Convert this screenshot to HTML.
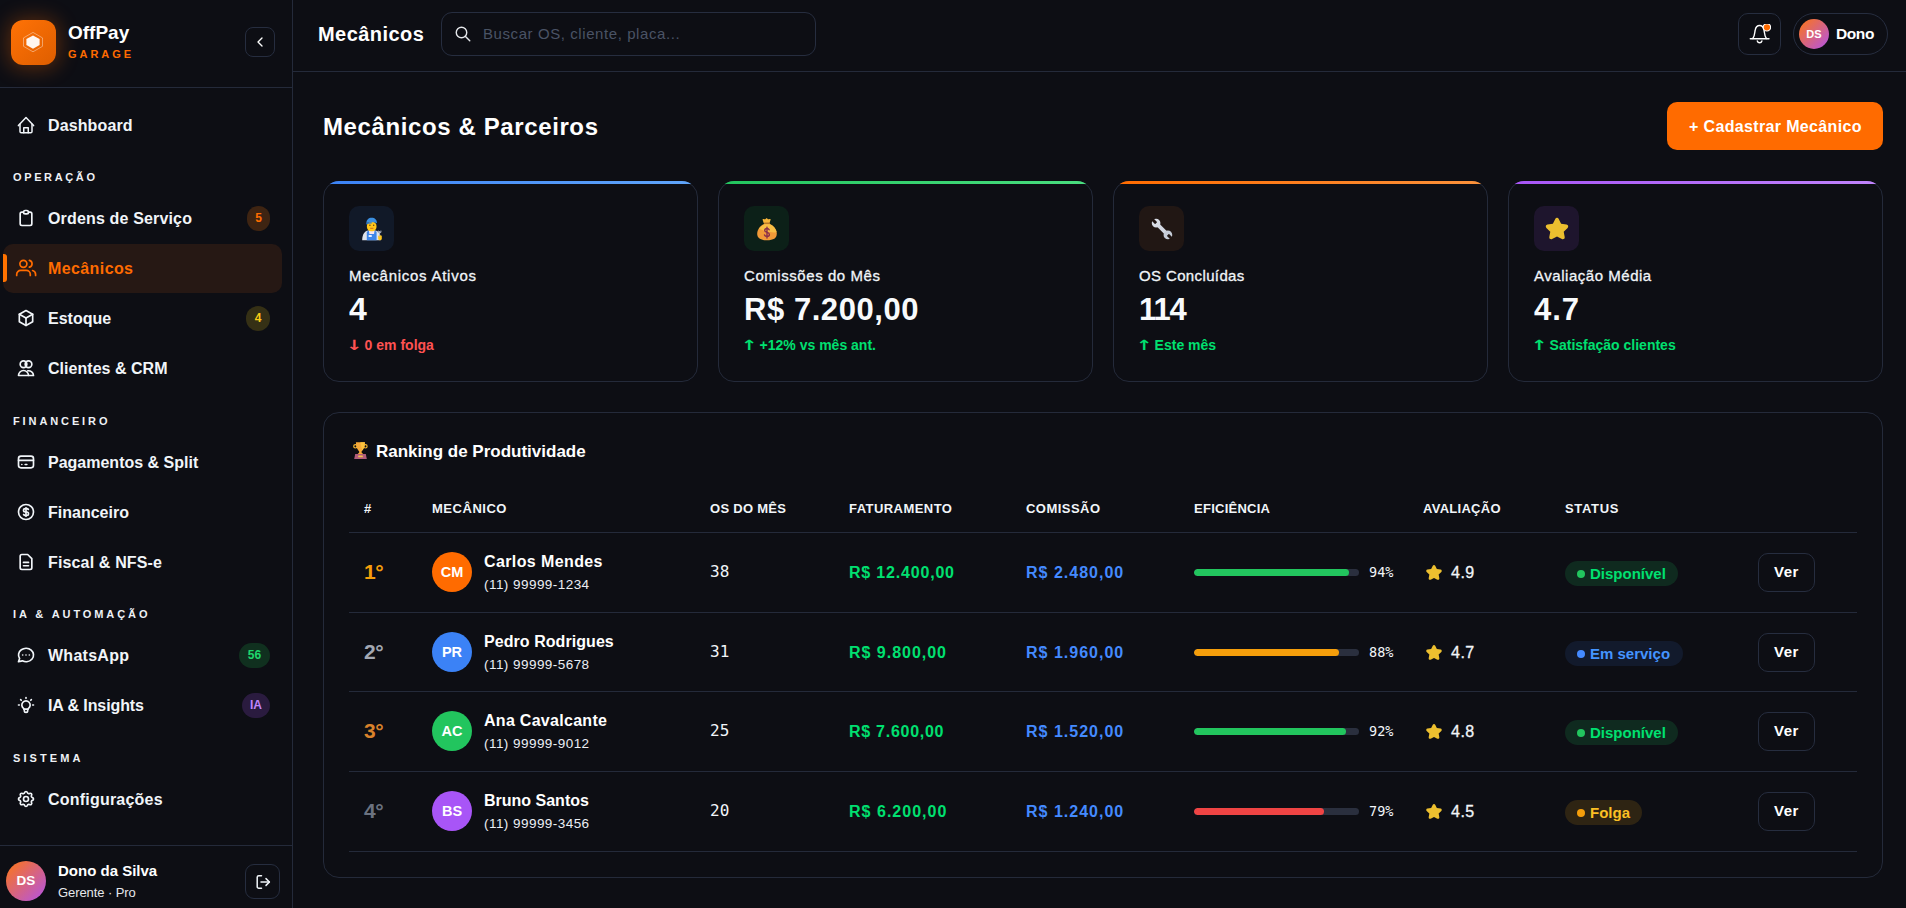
<!DOCTYPE html>
<html lang="pt-BR">
<head>
<meta charset="utf-8">
<title>OffPay Garage - Mecânicos</title>
<style>
*{box-sizing:border-box;margin:0;padding:0}
html,body{width:1906px;height:908px;overflow:hidden;background:#0d0e14}
body{font-family:"Liberation Sans",sans-serif;color:#f1f5f9;position:relative;-webkit-font-smoothing:antialiased}
.abs{position:absolute}
.t{position:absolute;white-space:nowrap;line-height:1}
svg{display:block}
.ico{position:absolute;width:20px;height:20px;fill:none;stroke:currentColor;stroke-width:2;stroke-linecap:round;stroke-linejoin:round}

/* ---------- sidebar ---------- */
#sb{position:absolute;left:0;top:0;width:293px;height:908px;border-right:1px solid #242a3a;background:#0d0e14}
#sbhead{position:absolute;left:0;top:0;width:292px;height:88px;border-bottom:1px solid #242a3a}
#logo{position:absolute;left:11px;top:20px;width:45px;height:45px;border-radius:12px;background:linear-gradient(135deg,#ff7206,#de5e00);box-shadow:0 1px 20px 3px rgba(255,107,0,.3)}
.sqbtn{position:absolute;border:1px solid #262d3f;border-radius:8px;background:#0d0e14}
.nav{position:absolute;left:0;width:292px;height:48px;color:#f1f5f9}
.nav .ico{left:16px;top:14px}
.nav .t{left:48px;top:17px;font-size:16px;font-weight:700}
.nav.act{color:#ff6b00}
.sec{position:absolute;left:13px;font-size:11px;font-weight:700;letter-spacing:2.2px;line-height:1;white-space:nowrap;color:#eef1f6}
.bdg{position:absolute;height:25px;border-radius:12.500px;font-size:12px;font-weight:700;line-height:25px;text-align:center;margin-top:-.5px}
#sbfoot{position:absolute;left:0;top:845px;width:292px;height:63px;border-top:1px solid #242a3a}

/* ---------- topbar ---------- */
#top{position:absolute;left:293px;top:0;width:1613px;height:72px;border-bottom:1px solid #242a3a}

/* ---------- cards ---------- */
.card{position:absolute;top:181px;width:375px;height:201px;border:1px solid #242a3a;border-radius:16px;background:#0d0e14}
.card .bar{position:absolute;left:-1px;top:-1px;width:375px;height:20px;border-radius:16px 16px 0 0;overflow:hidden}
.card .bar i{display:block;width:100%;height:3px}
.card .ib{position:absolute;left:25px;top:24px;width:45px;height:45px;border-radius:10px}
.card .lbl{left:25px;top:85.700px;font-size:15px;font-weight:400;color:#f1f5f9;-webkit-text-stroke:.3px #f1f5f9}
.card .val{left:25px;top:112px;font-size:31px;font-weight:700;color:#f8fafc}
.card .sub{left:25px;top:156px;font-size:14px;font-weight:700;letter-spacing:0}
.card .sub b{font-family:"DejaVu Sans",sans-serif;font-weight:700;font-size:14px;letter-spacing:0;display:inline-block;transform:scaleX(1.400);transform-origin:40% 50%;margin-right:1px;margin-left:-1px;position:relative;top:-.5px}

/* ---------- panel / table ---------- */
#panel{position:absolute;left:323px;top:412px;width:1560px;height:466px;border:1px solid #242a3a;border-radius:16px;background:#0d0e14}
.th{position:absolute;top:502px;font-size:13px;font-weight:700;line-height:1;white-space:nowrap;color:#f1f5f9}
.hr{position:absolute;left:349px;width:1508px;height:1px;background:#242a3a}
.row{position:absolute;left:349px;width:1508px;height:80px}
.row .t{line-height:1}
.av{position:absolute;left:83px;top:20px;width:40px;height:40px;border-radius:50%;color:#fff;font-size:14.500px;font-weight:700;text-align:center;line-height:40px}
.track{position:absolute;left:845px;top:36.5px;width:165px;height:7.5px;border-radius:4px;background:#2a2f3e;overflow:hidden}
.track i{display:block;height:100%;border-radius:4px}
.st{position:absolute;left:1216px;top:29px;height:25px;border-radius:13px;font-size:15px;font-weight:700;line-height:25px;white-space:nowrap}
.st i{position:absolute;left:12px;top:8.500px;width:8px;height:8px;border-radius:50%}
.st span{position:absolute;left:25px;top:0}
.ver{letter-spacing:.5px;position:absolute;left:1409px;top:21px;width:57px;height:39px;border:1px solid #262d3f;border-radius:10px;font-size:15px;font-weight:700;text-align:center;line-height:35.5px;color:#fff}
.mono{font-family:"DejaVu Sans Mono","Liberation Mono",monospace}

.rk{left:15px;top:29px;font-size:21px;font-weight:700;letter-spacing:-.5px}
.nm{left:135px;top:22px;font-size:16px;font-weight:700;color:#fff}
.ph{left:135px;top:46px;font-size:13.5px;color:#eceff4;letter-spacing:.45px}
.os{left:361px;top:32px;font-size:16px;color:#f1f5f9}
.fat{left:500px;top:33px;font-size:16px;font-weight:700;color:#00e070}
.com{left:677px;top:33px;font-size:16px;font-weight:700;color:#448aff}
.pct{left:1020px;top:33.5px;font-size:13.5px;color:#f1f5f9}
.star{left:1076px;top:31px;width:18px;height:18px}
.rat{left:1102px;top:32.500px;font-size:16px;color:#f1f5f9;letter-spacing:.5px;-webkit-text-stroke:.3px #f1f5f9}
</style>
</head>
<body>
<svg width="0" height="0" style="position:absolute"><defs>
<path id="g-star" d="M12 2.600c.700 0 1.300 .400 1.600 1l2.200 4.500l5 .700c1.500 .200 2.100 2 1 3.100l-3.600 3.500l.9 4.900c.300 1.500 -1.300 2.600 -2.600 1.900l-4.500 -2.300l-4.500 2.300c-1.300 .700 -2.900 -.400 -2.600 -1.900l.9 -4.900l-3.600 -3.500c-1.100 -1.100 -.500 -2.900 1 -3.100l5 -.700l2.200 -4.500c.300 -.600 .900 -1 1.600 -1z" fill="#ecbf2f"/>
</defs></svg>

<!-- ================= SIDEBAR ================= -->
<div id="sb">
  <div id="sbhead">
    <div id="logo">
      <svg class="abs" style="left:11.800px;top:11.700px" width="20" height="20" viewBox="0 0 20 20">
        <polygon points="10,0.400 19.500,5.900 19.500,14.300 10,19.800 0.500,14.300 0.500,5.900" fill="none" stroke="rgba(255,255,255,.5)" stroke-width=".800"/>
        <polygon points="10,3.400 16.600,7.100 16.600,13.100 10,16.800 3.400,13.100 3.400,7.100" fill="#fff6ee"/>
      </svg>
    </div>
    <div class="t" style="left:68px;top:23px;font-size:19px;font-weight:700;color:#fff">OffPay</div>
    <div class="t" style="left:68px;top:49px;font-size:11px;font-weight:700;color:#ff6b00;letter-spacing:2.94px">GARAGE</div>
    <div class="sqbtn" style="left:245px;top:27px;width:30px;height:30px">
      <svg class="abs" style="left:6px;top:6px;fill:none;stroke:#fff;stroke-width:2;stroke-linecap:round;stroke-linejoin:round" width="16" height="16" viewBox="0 0 24 24"><path d="M15 6l-6 6l6 6"/></svg>
    </div>
  </div>

  <div class="nav" style="top:101px">
    <svg class="ico" style="stroke-width:1.800" viewBox="0 0 24 24"><path d="M2.900 12.700l9.100 -9.600l9.100 9.600"/><path d="M4.800 11v8.700a1.500 1.500 0 0 0 1.500 1.500h11.400a1.500 1.500 0 0 0 1.500 -1.500v-8.700"/><path d="M9.300 21.200v-5.900h5.400v5.900"/></svg>
    <div class="t" style="letter-spacing:0.12px">Dashboard</div>
  </div>

  <div class="sec" style="top:172px;letter-spacing:2.63px">OPERAÇÃO</div>

  <div class="nav" style="top:194px">
    <svg class="ico" viewBox="0 0 24 24"><path d="M9 5h-2a2 2 0 0 0 -2 2v12a2 2 0 0 0 2 2h10a2 2 0 0 0 2 -2v-12a2 2 0 0 0 -2 -2h-2"/><path d="M9 5a2 2 0 0 1 2 -2h2a2 2 0 0 1 2 2a2 2 0 0 1 -2 2h-2a2 2 0 0 1 -2 -2z"/></svg>
    <div class="t" style="letter-spacing:0.16px">Ordens de Serviço</div>
    <div class="bdg" style="left:247px;top:12px;width:23px;background:#3e2412;color:#ff6d00">5</div>
  </div>

  <div class="abs" style="left:3px;top:244px;width:279px;height:49px;border-radius:10px;background:#261814"></div>
  <div class="abs" style="left:3px;top:254px;width:4px;height:28px;border-radius:0 3px 3px 0;background:#ff7200"></div>
  <div class="nav act" style="top:244px">
    <svg class="ico" style="left:14px;top:12px;width:24px;height:24px;stroke-width:1.700" viewBox="0 0 24 24"><circle cx="9.400" cy="7.800" r="3.500"/><path d="M2.700 19.500v-1.100a4 4 0 0 1 4 -4h5.600a4 4 0 0 1 4 4v1.100"/><path d="M15.400 4.400a3.500 3.500 0 0 1 0 6.800"/><path d="M21.600 19.500v-1.100a4 4 0 0 0 -3 -3.850"/></svg>
    <div class="t" style="letter-spacing:.4px">Mecânicos</div>
  </div>

  <div class="nav" style="top:294px">
    <svg class="ico" viewBox="0 0 24 24"><path d="M12 3l8 4.500l0 9l-8 4.500l-8 -4.500l0 -9l8 -4.500"/><path d="M12 12l8 -4.500"/><path d="M12 12l0 9"/><path d="M12 12l-8 -4.500"/></svg>
    <div class="t" style="letter-spacing:0px">Estoque</div>
    <div class="bdg" style="left:246px;top:12px;width:24px;background:#353015;color:#facc15">4</div>
  </div>

  <div class="nav" style="top:344px">
    <svg class="ico" viewBox="0 0 24 24"><circle cx="9" cy="7.5" r="4"/><circle cx="15" cy="7.500" r="4"/><path d="M3 21a6 6 0 0 1 12 0z"/><path d="M14.200 15.400a6 6 0 0 1 6.800 5.600h-6"/></svg>
    <div class="t" style="letter-spacing:0.03px">Clientes &amp; CRM</div>
  </div>

  <div class="sec" style="top:416px;letter-spacing:2.89px">FINANCEIRO</div>

  <div class="nav" style="top:438px">
    <svg class="ico" viewBox="0 0 24 24"><path d="M3 8a3 3 0 0 1 3 -3h12a3 3 0 0 1 3 3v8a3 3 0 0 1 -3 3h-12a3 3 0 0 1 -3 -3z"/><path d="M3 10l18 0"/><path d="M7 15l.01 0"/><path d="M11 15l2 0"/></svg>
    <div class="t" style="letter-spacing:0px">Pagamentos &amp; Split</div>
  </div>
  <div class="nav" style="top:488px">
    <svg class="ico" viewBox="0 0 24 24"><path d="M12 12m-9 0a9 9 0 1 0 18 0a9 9 0 1 0 -18 0"/><path d="M14.800 9a2 2 0 0 0 -1.800 -1h-2a2 2 0 1 0 0 4h2a2 2 0 1 1 0 4h-2a2 2 0 0 1 -1.800 -1"/><path d="M12 7v10"/></svg>
    <div class="t" style="letter-spacing:0px">Financeiro</div>
  </div>
  <div class="nav" style="top:538px">
    <svg class="ico" viewBox="0 0 24 24"><path d="M17 21h-10a2 2 0 0 1 -2 -2v-14a2 2 0 0 1 2 -2h7l5 5v11a2 2 0 0 1 -2 2z"/><path d="M9 12.500h6"/><path d="M9 16.500h6"/></svg>
    <div class="t" style="letter-spacing:0.15px">Fiscal &amp; NFS-e</div>
  </div>

  <div class="sec" style="top:609px;letter-spacing:2.9px">IA &amp; AUTOMAÇÃO</div>

  <div class="nav" style="top:631px">
    <svg class="ico" viewBox="0 0 24 24"><path d="M3 20l1.300 -3.900c-2.324 -3.437 -1.426 -7.872 2.100 -10.374c3.526 -2.501 8.590 -2.296 11.845 .480c3.255 2.777 3.695 7.266 1.029 10.501c-2.666 3.235 -7.615 4.215 -11.574 2.293l-4.700 1"/><path d="M12 12l0 .01"/><path d="M8 12l0 .01"/><path d="M16 12l0 .01"/></svg>
    <div class="t" style="letter-spacing:0.27px">WhatsApp</div>
    <div class="bdg" style="left:239px;top:12px;width:31px;background:#10301f;color:#1fd66c">56</div>
  </div>
  <div class="nav" style="top:681px">
    <svg class="ico" viewBox="0 0 24 24"><path d="M3 12h1m8 -9v1m8 8h1m-15.400 -6.400l.7 .7m12.100 -.7l-.7 .7"/><path d="M9 16a5 5 0 1 1 6 0a3.500 3.500 0 0 0 -1 3a2 2 0 0 1 -4 0a3.500 3.500 0 0 0 -1 -3"/><path d="M9.700 17l4.600 0"/></svg>
    <div class="t" style="letter-spacing:-0.1px">IA &amp; Insights</div>
    <div class="bdg" style="left:242px;top:12px;width:28px;background:#2a1b3f;color:#c084fc">IA</div>
  </div>

  <div class="sec" style="top:753px;letter-spacing:3.1px">SISTEMA</div>

  <div class="nav" style="top:775px">
    <svg class="ico" viewBox="0 0 24 24"><path d="M10.325 4.317c.426 -1.756 2.924 -1.756 3.350 0a1.724 1.724 0 0 0 2.573 1.066c1.543 -.940 3.310 .826 2.370 2.370a1.724 1.724 0 0 0 1.065 2.572c1.756 .426 1.756 2.924 0 3.350a1.724 1.724 0 0 0 -1.066 2.573c.940 1.543 -.826 3.310 -2.370 2.370a1.724 1.724 0 0 0 -2.572 1.065c-.426 1.756 -2.924 1.756 -3.350 0a1.724 1.724 0 0 0 -2.573 -1.066c-1.543 .940 -3.310 -.826 -2.370 -2.370a1.724 1.724 0 0 0 -1.065 -2.572c-1.756 -.426 -1.756 -2.924 0 -3.350a1.724 1.724 0 0 0 1.066 -2.573c-.940 -1.543 .826 -3.310 2.370 -2.370c1 .608 2.296 .070 2.572 -1.065z"/><path d="M9 12a3 3 0 1 0 6 0a3 3 0 0 0 -6 0"/></svg>
    <div class="t" style="letter-spacing:0.21px">Configurações</div>
  </div>

  <div id="sbfoot">
    <div class="abs" style="left:6px;top:15px;width:40px;height:40px;border-radius:50%;background:linear-gradient(135deg,#f5722c 12%,#b855d8 92%);color:#fff;font-size:13.500px;font-weight:700;text-align:center;line-height:40px">DS</div>
    <div class="t" style="left:58px;top:17px;font-size:15px;font-weight:700;color:#fff">Dono da Silva</div>
    <div class="t" style="left:58px;top:40px;font-size:13px;color:#e5e7eb;letter-spacing:-.08px">Gerente · Pro</div>
    <div class="sqbtn" style="left:245px;top:18px;width:35px;height:35px;border-radius:9px">
      <svg class="abs" style="left:9px;top:9px;fill:none;stroke:#f1f5f9;stroke-width:1.5;stroke-linecap:round;stroke-linejoin:round" width="16" height="16" viewBox="0 0 16 16"><path d="M6.500 1.700H3.800a1.600 1.600 0 0 0 -1.600 1.600v9.400a1.600 1.600 0 0 0 1.600 1.600h2.700"/><path d="M6 8h8.300"/><path d="M11 4.600l3.400 3.400l-3.400 3.400"/></svg>
    </div>
  </div>
</div>

<!-- ================= TOPBAR ================= -->
<div id="top">
  <div class="t" style="left:25px;top:24px;font-size:20px;font-weight:700;color:#fff;letter-spacing:.44px">Mecânicos</div>
  <div class="abs" style="left:148px;top:12px;width:375px;height:44px;border:1px solid #262d3f;border-radius:11px">
    <svg class="abs" style="left:12px;top:12px;fill:none;stroke:#e5e7eb;stroke-width:1.900;stroke-linecap:round;stroke-linejoin:round" width="18" height="18" viewBox="0 0 24 24"><path d="M10 10m-7 0a7 7 0 1 0 14 0a7 7 0 1 0 -14 0"/><path d="M21 21l-6 -6"/></svg>
    <div class="t" style="left:41px;top:13px;font-size:15px;color:#4a5365;letter-spacing:0.58px">Buscar OS, cliente, placa...</div>
  </div>
  <div class="sqbtn" style="left:1445px;top:13px;width:43px;height:42px;border-radius:10px">
    <svg class="abs" style="left:10px;top:10px" width="22" height="22" viewBox="0 0 22 22" fill="none" stroke="#fff" stroke-width="1.400" stroke-linecap="round" stroke-linejoin="round">
      <path d="M1.300 14.700H20"/><path d="M3.800 14.500C6 11.500 5.600 8.500 6.200 6C6.800 3 8.600 1.500 10.600 1.500C12.600 1.500 14.400 3 15 6C15.600 8.500 15.200 11.500 17.400 14.500"/><path d="M8.300 17a2.400 2.400 0 0 0 4.600 0"/>
      <circle cx="17.900" cy="3.300" r="3.700" fill="#ff6b00" stroke="#fff" stroke-width="1.100"/>
    </svg>
  </div>
  <div class="abs" style="left:1500px;top:13px;width:95px;height:42px;border:1px solid #262d3f;border-radius:21px">
    <div class="abs" style="left:5px;top:5px;width:30px;height:30px;border-radius:50%;background:linear-gradient(135deg,#f5722c 12%,#b855d8 92%);color:#fff;font-size:11px;font-weight:700;text-align:center;line-height:30px">DS</div>
    <div class="t" style="left:42px;top:11.600px;font-size:15.500px;font-weight:700;color:#fff;letter-spacing:-.4px">Dono</div>
  </div>
</div>

<!-- ================= PAGE HEAD ================= -->
<div class="t" style="left:323px;top:114.5px;font-size:24px;font-weight:700;color:#fff;letter-spacing:0.61px">Mecânicos &amp; Parceiros</div>
<div class="abs" style="left:1667px;top:102px;width:216px;height:48px;border-radius:10px;background:#ff6b00">
  <div class="t" style="left:22px;top:17px;font-size:16px;font-weight:700;color:#fff;letter-spacing:0.35px">+ Cadastrar Mecânico</div>
</div>

<!-- ================= CARDS ================= -->
<div class="card" style="left:323px">
  <div class="bar"><i style="background:linear-gradient(90deg,#3b82f6,#60a5fa)"></i></div>
  <div class="ib" style="background:#111928"><svg class="abs" style="left:11px;top:10px" width="24" height="26" viewBox="0 0 24 26">
  <path d="M2.200 24.200c0 -6 2.600 -9.200 6 -9.600h7c3.400 .4 5.400 3.600 5.400 9.600z" fill="#dfe3ea"/>
  <path d="M6.800 24.200v-8.400l2.200 -1.200h5.400l2.200 1.200v8.400z" fill="#3f86e8"/>
  <path d="M8.800 14.600h5.800l-.6 3.400h-4.600z" fill="#f6e6ee"/>
  <rect x="8.600" y="19" width="3.200" height="2" rx=".5" fill="#e8f0ff"/>
  <rect x="6.900" y="5.800" width="9.600" height="9.400" rx="4.200" fill="#ffc61a"/>
  <path d="M6.400 7.200c0 -3.400 2.200 -5.400 5.300 -5.400c3.100 0 5.300 2 5.300 5.400c-1.400 -.7 -3 -1 -5.300 -1c-2.300 0 -3.900 .3 -5.300 1z" fill="#3b8fe0"/>
  <path d="M5.800 7.600c1.800 -1 3.600 -1.300 5.900 -1.300v1.200c-2.300 0 -4.100 .3 -5.500 1z" fill="#2f78c8"/>
  <circle cx="9.900" cy="9.300" r=".7" fill="#5a3a1a"/><circle cx="13.700" cy="9.300" r=".7" fill="#5a3a1a"/>
  <path d="M10.600 12.300h2.400" stroke="#c2571a" stroke-width=".8" stroke-linecap="round"/>
  <rect x="18.200" y="19.200" width="3.600" height="5" rx="1.400" fill="#ffc61a"/>
  <path d="M19.600 15v5.500M18.300 14.600v1.800h2.600v-1.800" stroke="#aeb6c6" stroke-width="1" fill="none"/>
</svg></div>
  <div class="t lbl" style="letter-spacing:0.74px">Mecânicos Ativos</div>
  <div class="t val" style="font-size:32px;top:111px">4</div>
  <div class="t sub" style="color:#ff5252"><b>↓</b> 0 em folga</div>
</div>
<div class="card" style="left:718px">
  <div class="bar"><i style="background:linear-gradient(90deg,#22c55e,#4ade80)"></i></div>
  <div class="ib" style="background:#0c2018"><svg class="abs" style="left:11px;top:10px" width="24" height="26" viewBox="0 0 24 26">
  <path d="M8.600 3c.9 .5 1.600 .3 2.200 -.3c.4 -.5 1.200 -.5 1.600 0c.6 .6 1.300 .8 2.200 .3c.6 -.3 1.200 .2 1 .8l-1.200 3.400h-5.600l-1.200 -3.400c-.2 -.6 .4 -1.100 1 -.8z" fill="#f7b53a"/>
  <rect x="9" y="6.600" width="6" height="1.600" rx=".6" fill="#b9782a"/>
  <path d="M9.200 8c-4.200 1.800 -7 5.800 -7 9.800c0 4.400 3.400 6.500 9.800 6.500s9.800 -2.100 9.800 -6.500c0 -4 -2.800 -8 -7 -9.800z" fill="#f19a38"/>
  <path d="M9.400 8.200c-2.400 1 -4.200 2.800 -5.400 4.800c3 .6 6 2.600 8 2.600c3 0 6.600 1.800 9.600 .4c-.6 -3.300 -3.200 -6.400 -6.800 -7.800z" fill="#f7be45"/>
  <path transform="translate(0 1.300)" d="M14.200 12.500c-.4 -.9 -1.200 -1.300 -2.200 -1.300c-1.400 0 -2.300 .8 -2.300 1.900c0 2.600 4.700 1.500 4.700 4c0 1.200 -1 2 -2.400 2c-1.200 0 -2.100 -.5 -2.500 -1.500M12 9.800v11" stroke="#8a2f4a" stroke-width="1.400" fill="none" stroke-linecap="round"/>
</svg></div>
  <div class="t lbl" style="letter-spacing:0.56px">Comissões do Mês</div>
  <div class="t val" style="letter-spacing:.55px">R$ 7.200,00</div>
  <div class="t sub" style="color:#00e070"><b>↑</b> +12% vs mês ant.</div>
</div>
<div class="card" style="left:1113px">
  <div class="bar"><i style="background:linear-gradient(90deg,#ff6b00,#fb923c)"></i></div>
  <div class="ib" style="background:#211714"><svg class="abs" style="left:9.500px;top:9.900px" width="26" height="26" viewBox="0 0 24 24">
  <g transform="rotate(-45 12 12)">
    <rect x="10.300" y="5" width="3.400" height="14" fill="#d3d8e2"/>
    <circle cx="12" cy="4.300" r="4" fill="#d9dde6"/>
    <circle cx="12" cy="19.700" r="4" fill="#c6ccd8"/>
    <rect x="10.600" y="-1" width="2.800" height="5.400" rx=".6" fill="#211714"/>
    <rect x="10.600" y="19.600" width="2.800" height="5.400" rx=".6" fill="#211714"/>
  </g>
</svg></div>
  <div class="t lbl" style="letter-spacing:0.37px">OS Concluídas</div>
  <div class="t val" style="letter-spacing:-1.1px">114</div>
  <div class="t sub" style="color:#00e070"><b>↑</b> Este mês</div>
</div>
<div class="card" style="left:1508px">
  <div class="bar"><i style="background:linear-gradient(90deg,#a855f7,#c084fc)"></i></div>
  <div class="ib" style="background:#1e152d"><svg class="abs" style="left:9.500px;top:9.200px" width="26" height="26" viewBox="0 0 24 24"><use href="#g-star"/></svg></div>
  <div class="t lbl" style="letter-spacing:0.53px">Avaliação Média</div>
  <div class="t val" style="letter-spacing:.9px">4.7</div>
  <div class="t sub" style="color:#00e070"><b>↑</b> Satisfação clientes</div>
</div>

<!-- ================= PANEL ================= -->
<div id="panel"></div>
<svg class="abs" style="left:352px;top:442px" width="17" height="18" viewBox="0 0 17 18">
  <circle cx="3.400" cy="4.300" r="1.700" fill="none" stroke="#f5b52e" stroke-width="1.200"/>
  <circle cx="13.400" cy="4.300" r="1.700" fill="none" stroke="#f5b52e" stroke-width="1.200"/>
  <path d="M3.900 .2h9c0 4.800 -1.800 7.800 -3.300 9.200v1.200l1.500 1.500h-5.400l1.500 -1.500v-1.200c-1.500 -1.400 -3.300 -4.400 -3.300 -9.200z" fill="#f6a93a"/>
  <path d="M8.400 .2h4.500c0 4 -1.300 6.800 -2.600 8.400c-.8 -2.500 -1.500 -5.400 -1.900 -8.400z" fill="#fbc23c"/>
  <path d="M3.200 12.100h10.600l1 4.900h-12.600z" fill="#b25c7a"/>
  <rect x="6.200" y="13.600" width="4.600" height="1.700" rx=".3" fill="#f3c04a"/>
</svg>
<div class="t" style="left:376px;top:443px;font-size:17px;font-weight:700;color:#fff">Ranking de Produtividade</div>

<div class="th" style="left:364px">#</div>
<div class="th" style="left:432px;letter-spacing:0.53px">MECÂNICO</div>
<div class="th" style="left:710px;letter-spacing:0.29px">OS DO MÊS</div>
<div class="th" style="left:849px;letter-spacing:0.45px">FATURAMENTO</div>
<div class="th" style="left:1026px;letter-spacing:0.46px">COMISSÃO</div>
<div class="th" style="left:1194px;letter-spacing:0.26px">EFICIÊNCIA</div>
<div class="th" style="left:1423px;letter-spacing:0.27px">AVALIAÇÃO</div>
<div class="th" style="left:1565px;letter-spacing:0.68px">STATUS</div>
<div class="hr" style="top:532px"></div>
<div class="hr" style="top:612px"></div>
<div class="hr" style="top:691px"></div>
<div class="hr" style="top:771px"></div>
<div class="hr" style="top:851px"></div>

<div class="row" style="top:532.300px">
  <div class="t rk" style="color:#f59e0b">1°</div>
  <div class="av" style="background:#ff6b00">CM</div>
  <div class="t nm" style="letter-spacing:0.39px">Carlos Mendes</div>
  <div class="t ph">(11) 99999-1234</div>
  <div class="t os mono">38</div>
  <div class="t fat" style="letter-spacing:0.81px">R$ 12.400,00</div>
  <div class="t com" style="letter-spacing:1.0px">R$ 2.480,00</div>
  <div class="track"><i style="width:94%;background:#22c55e"></i></div>
  <div class="t pct mono">94%</div>
  <svg class="abs star" viewBox="0 0 24 24"><use href="#g-star"/></svg>
  <div class="t rat">4.9</div>
  <div class="st" style="width:113px;background:#0f2a1f;color:#00e070"><i style="background:#22c55e"></i><span>Disponível</span></div>
  <div class="ver">Ver</div>
</div>
<div class="row" style="top:612px">
  <div class="t rk" style="color:#a3a8b3">2°</div>
  <div class="av" style="background:#3b82f6">PR</div>
  <div class="t nm" style="letter-spacing:0.06px">Pedro Rodrigues</div>
  <div class="t ph">(11) 99999-5678</div>
  <div class="t os mono">31</div>
  <div class="t fat" style="letter-spacing:0.98px">R$ 9.800,00</div>
  <div class="t com" style="letter-spacing:1.0px">R$ 1.960,00</div>
  <div class="track"><i style="width:88%;background:#f59e0b"></i></div>
  <div class="t pct mono">88%</div>
  <svg class="abs star" viewBox="0 0 24 24"><use href="#g-star"/></svg>
  <div class="t rat">4.7</div>
  <div class="st" style="width:118px;background:#121a2c;color:#4494ff"><i style="background:#448aff"></i><span>Em serviço</span></div>
  <div class="ver">Ver</div>
</div>
<div class="row" style="top:691.300px">
  <div class="t rk" style="color:#d9822b">3°</div>
  <div class="av" style="background:#22c55e">AC</div>
  <div class="t nm" style="letter-spacing:0.29px">Ana Cavalcante</div>
  <div class="t ph">(11) 99999-9012</div>
  <div class="t os mono">25</div>
  <div class="t fat" style="letter-spacing:0.73px">R$ 7.600,00</div>
  <div class="t com" style="letter-spacing:1.0px">R$ 1.520,00</div>
  <div class="track"><i style="width:92%;background:#22c55e"></i></div>
  <div class="t pct mono">92%</div>
  <svg class="abs star" viewBox="0 0 24 24"><use href="#g-star"/></svg>
  <div class="t rat">4.8</div>
  <div class="st" style="width:113px;background:#0f2a1f;color:#00e070"><i style="background:#22c55e"></i><span>Disponível</span></div>
  <div class="ver">Ver</div>
</div>
<div class="row" style="top:771.100px">
  <div class="t rk" style="color:#6b7280">4°</div>
  <div class="av" style="background:#a855f7">BS</div>
  <div class="t nm">Bruno Santos</div>
  <div class="t ph">(11) 99999-3456</div>
  <div class="t os mono">20</div>
  <div class="t fat" style="letter-spacing:1.02px">R$ 6.200,00</div>
  <div class="t com" style="letter-spacing:1.0px">R$ 1.240,00</div>
  <div class="track"><i style="width:79%;background:#ef4444"></i></div>
  <div class="t pct mono">79%</div>
  <svg class="abs star" viewBox="0 0 24 24"><use href="#g-star"/></svg>
  <div class="t rat">4.5</div>
  <div class="st" style="width:77px;background:#2e2413;color:#fbbf24"><i style="background:#f59e0b"></i><span>Folga</span></div>
  <div class="ver">Ver</div>
</div>

</body>
</html>
